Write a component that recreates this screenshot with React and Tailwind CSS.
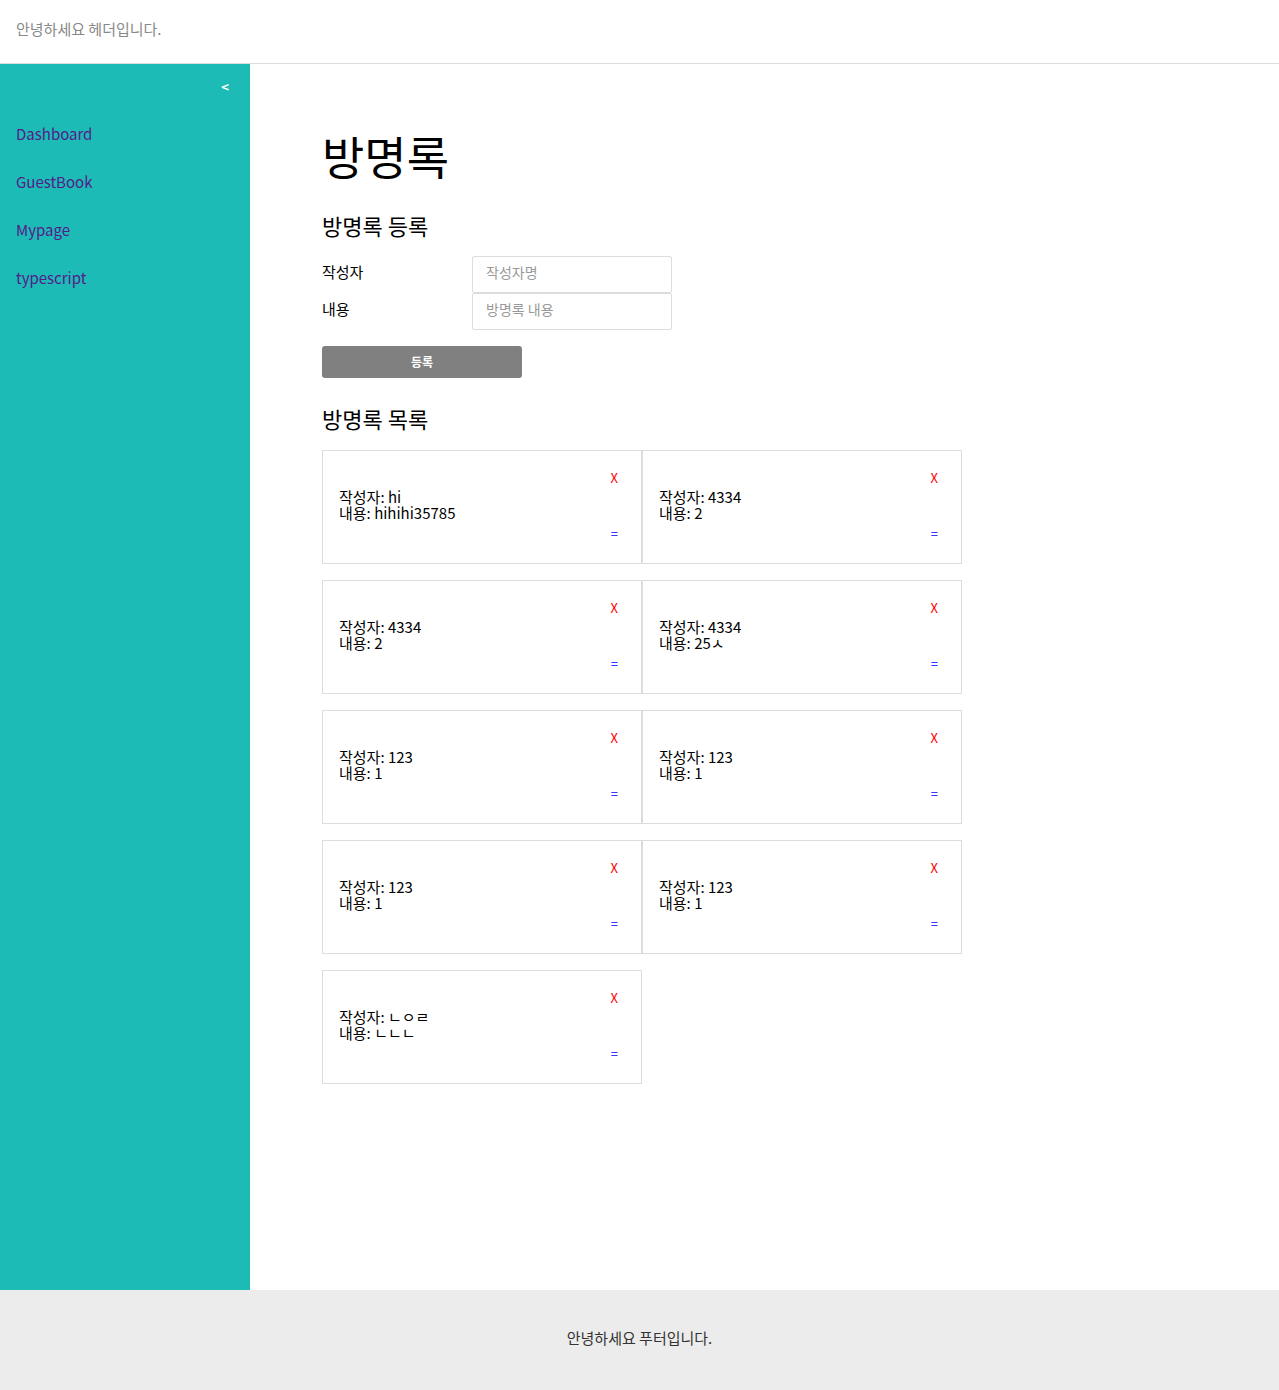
const entries = [
  { id: 1, name: 'hi', content: 'hihihi35785' },
  { id: 2, name: '4334', content: '2' },
  { id: 3, name: '4334', content: '2' },
  { id: 4, name: '4334', content: '25ㅅ' },
  { id: 5, name: '123', content: '1' },
  { id: 6, name: '123', content: '1' },
  { id: 7, name: '123', content: '1' },
  { id: 8, name: '123', content: '1' },
  { id: 9, name: 'ㄴㅇㄹ', content: 'ㄴㄴㄴ' },
]

const links = ['Dashboard', 'GuestBook', 'Mypage', 'typescript']

function Card({ entry }) {
  return (
    <div className="flex h-[114px] w-[320px] items-center justify-between border border-[#dddddd] pl-4 pr-[23px]">
      <div className="mb-[4px] text-[15px] leading-4 text-black">
        <div>작성자: {entry.name}</div>
        <div>내용: {entry.content}</div>
      </div>
      <div className="flex h-full flex-col items-center justify-between pb-[21px] pt-[19px]">
        <button className="text-[13px] leading-4 text-[#ff0000]">X</button>
        <button className="text-[13px] leading-4 text-[#0000ff]">=</button>
      </div>
    </div>
  )
}

export default function App() {
  return (
    <div className="flex min-h-[1390px] flex-col bg-white font-['Noto_Sans_CJK_KR','Noto_Sans',sans-serif]">
      {/* Header */}
      <header className="flex h-[64px] items-center border-b border-[#dddddd] px-4 pb-[4px]">
        <span className="text-[15px] text-[#888888]">안녕하세요 헤더입니다.</span>
      </header>

      <div className="flex flex-1">
        {/* Sidebar */}
        <aside className="w-[250px] shrink-0 bg-[#1dbbb5]">
          <div className="flex justify-end pr-[21px] pt-[13px]">
            <button className="text-[13px] font-bold leading-5 text-white">&lt;</button>
          </div>
          <nav className="mt-[26px] flex flex-col gap-[26px] px-4">
            {links.map((l) => (
              <a key={l} href="#" className="text-[15px] leading-[22px] text-[#551a8b]">
                {l}
              </a>
            ))}
          </nav>
        </aside>

        {/* Main */}
        <main className="flex-1 pb-[206px] pl-[72px] pt-[61px]">
          <h1 className="text-[46px] font-normal leading-[60px] text-black">방명록</h1>
          <h2 className="mt-[24px] text-[22px] font-normal leading-8 text-black">방명록 등록</h2>

          <form className="mt-[15px]" onSubmit={(e) => e.preventDefault()}>
            <div className="flex items-center">
              <label className="w-[150px] pb-1 text-[15px] text-black">작성자</label>
              <input
                placeholder="작성자명"
                className="h-[37px] w-[200px] rounded-[2px] border border-[#dddddd] px-[13px] pb-[5px] text-[14px] outline-none placeholder:text-[#999999]"
              />
            </div>
            <div className="flex items-center">
              <label className="w-[150px] pb-1 text-[15px] text-black">내용</label>
              <input
                placeholder="방명록 내용"
                className="h-[37px] w-[200px] rounded-[2px] border border-[#dddddd] px-[13px] pb-[5px] text-[14px] outline-none placeholder:text-[#999999]"
              />
            </div>
            <button
              type="submit"
              className="mt-[16px] h-[32px] w-[200px] rounded-[3px] bg-[#808080] text-[12px] font-bold text-white"
            >
              등록
            </button>
          </form>

          <h2 className="mt-[24px] text-[22px] font-normal leading-8 text-black">방명록 목록</h2>

          <div className="mt-[16px] grid w-[640px] grid-cols-[320px_320px] gap-y-4">
            {entries.map((e) => (
              <Card key={e.id} entry={e} />
            ))}
          </div>
        </main>
      </div>

      {/* Footer */}
      <footer className="flex h-[100px] items-center justify-center bg-[#ececec] pb-[4px]">
        <span className="text-[15px] text-[#333333]">안녕하세요 푸터입니다.</span>
      </footer>
    </div>
  )
}
